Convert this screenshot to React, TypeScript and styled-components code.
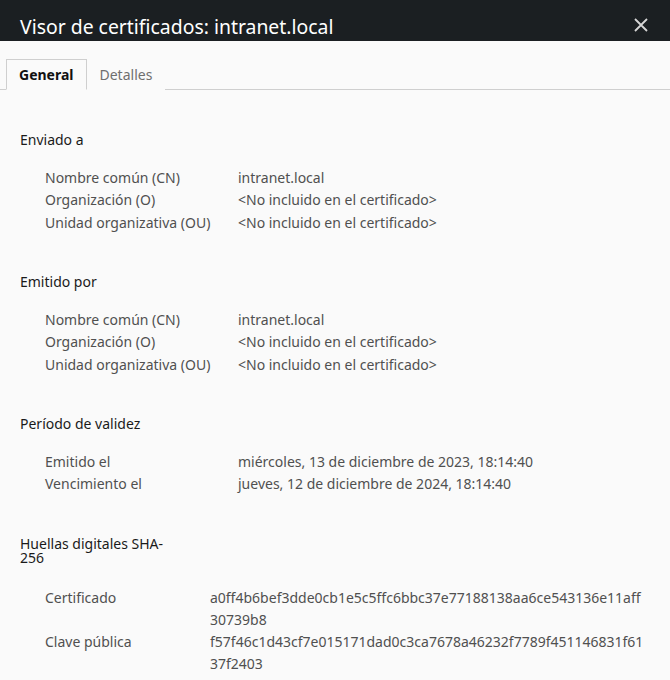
import React from 'react';
import styled, { createGlobalStyle } from 'styled-components';

const GlobalStyle = createGlobalStyle`
  html, body {
    margin: 0;
    padding: 0;
    background: #fafafa;
  }
  body {
    font-family: "Noto Sans", "Open Sans", sans-serif;
    -webkit-font-smoothing: antialiased;
  }
`;

const Page = styled.div`
  width: 670px;
  height: 680px;
  overflow: hidden;
  background: #fafafa;
`;

const TitleBar = styled.header`
  height: 41px;
  background: #1b1f22;
  display: flex;
  align-items: flex-end;
  justify-content: space-between;
  padding: 0 20px;
  box-sizing: border-box;
`;

const Title = styled.h1`
  margin: 0;
  font-size: 19.4px;
  font-weight: 400;
  color: #ffffff;
  line-height: 28px;
`;

const CloseButton = styled.button`
  width: 24px;
  height: 24px;
  margin: 0 -3px 4px 0;
  padding: 0;
  border: none;
  background: transparent;
  display: flex;
  align-items: center;
  justify-content: center;
  cursor: pointer;
`;

const TabBar = styled.nav`
  display: flex;
  padding: 18px 6px 0;
  border-bottom: 1px solid #cfcfcf;
`;

const Tab = styled.div<{ $active?: boolean }>`
  height: 31px;
  padding: 0 12px;
  display: flex;
  align-items: center;
  font-size: 14px;
  box-sizing: border-box;
  margin-bottom: -1px;
  color: ${p => (p.$active ? '#111111' : '#6f6f6f')};
  font-weight: ${p => (p.$active ? 700 : 400)};
  border: 1px solid ${p => (p.$active ? '#cfcfcf' : 'transparent')};
  border-bottom-color: ${p => (p.$active ? '#fafafa' : 'transparent')};
  background: #fafafa;
`;

const Content = styled.main`
  padding: 43px 20px 0;
  display: flex;
  flex-direction: column;
  gap: 41px;
`;

const Section = styled.section<{ $gap: number }>`
  display: flex;
  flex-direction: column;
  gap: ${p => p.$gap}px;
`;

const Heading = styled.h2`
  margin: 0;
  max-width: 150px;
  font-size: 14px;
  font-weight: 400;
  line-height: 14px;
  color: #1a1a1a;
`;

const Rows = styled.div<{ $labelWidth: number; $lineHeight: number }>`
  display: grid;
  grid-template-columns: ${p => p.$labelWidth}px 1fr;
  padding-left: 25px;
  font-size: 14px;
  line-height: ${p => p.$lineHeight}px;
  color: #505050;
`;

const Label = styled.div``;

const Value = styled.div``;

const ValueLine = styled.span`
  display: block;
`;

type Row = [string, string];

const subject: Row[] = [
  ['Nombre común (CN)', 'intranet.local'],
  ['Organización (O)', '<No incluido en el certificado>'],
  ['Unidad organizativa (OU)', '<No incluido en el certificado>'],
];

const validity: Row[] = [
  ['Emitido el', 'miércoles, 13 de diciembre de 2023, 18:14:40'],
  ['Vencimiento el', 'jueves, 12 de diciembre de 2024, 18:14:40'],
];

const fingerprints: Row[] = [
  ['Certificado', 'a0ff4b6bef3dde0cb1e5c5ffc6bbc37e77188138aa6ce543136e11aff30739b8'],
  ['Clave pública', 'f57f46c1d43cf7e015171dad0c3ca7678a46232f7789f451146831f6137f2403'],
];

// hashes wrap every 57 characters
const chunk = (s: string, n: number) => s.match(new RegExp(`.{1,${n}}`, 'g')) ?? [s];

const InfoSection = ({
  title,
  rows,
  labelWidth = 193,
  lineHeight = 22.5,
  gap = 19.5,
  hash,
}: {
  title: string;
  rows: Row[];
  labelWidth?: number;
  lineHeight?: number;
  gap?: number;
  hash?: boolean;
}) => (
  <Section $gap={gap}>
    <Heading>{title}</Heading>
    <Rows $labelWidth={labelWidth} $lineHeight={lineHeight}>
      {rows.map(([label, value]) => (
        <React.Fragment key={label}>
          <Label>{label}</Label>
          <Value>
            {hash
              ? chunk(value, 57).map(line => <ValueLine key={line}>{line}</ValueLine>)
              : value}
          </Value>
        </React.Fragment>
      ))}
    </Rows>
  </Section>
);

const App = () => {
  return (
    <>
      <GlobalStyle />
      <Page>
        <TitleBar>
          <Title>Visor de certificados: intranet.local</Title>
          <CloseButton aria-label="Cerrar">
            <svg width="14" height="14" viewBox="0 0 14 14">
              <path d="M1 1L13 13M13 1L1 13" stroke="#d6d6d6" strokeWidth="1.8" />
            </svg>
          </CloseButton>
        </TitleBar>

        <TabBar>
          <Tab $active>General</Tab>
          <Tab>Detalles</Tab>
        </TabBar>

        <Content>
          <InfoSection title="Enviado a" rows={subject} />
          <InfoSection title="Emitido por" rows={subject} />
          <InfoSection title="Período de validez" rows={validity} />
          <InfoSection
            title="Huellas digitales SHA-256"
            rows={fingerprints}
            labelWidth={165}
            lineHeight={22}
            gap={22.5}
            hash
          />
        </Content>
      </Page>
    </>
  );
};

export default App;
